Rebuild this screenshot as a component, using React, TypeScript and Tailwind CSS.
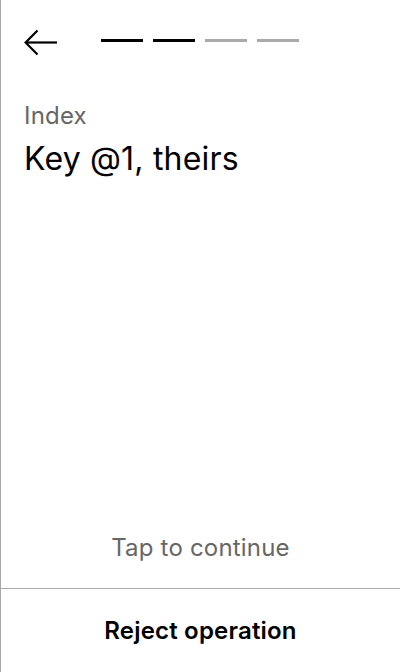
import React from "react";

export default function App() {
  return (
    <div
      className="w-[400px] h-[672px] flex flex-col bg-white border-l border-[#a8a8a8] text-black tracking-[0.012em]"
      style={{ fontFamily: "Inter, 'Noto Sans', sans-serif" }}
    >
      <div className="flex items-center h-[84px] pl-[23px] gap-[43px]">
        <svg width="34" height="27" viewBox="0 0 34 27" fill="none" stroke="black" strokeWidth="2.2">
          <path d="M33 13.5H2.5" />
          <path d="M13.5 1.5L1.6 13.5L13.5 25.5" />
        </svg>
        <div className="flex gap-[10px] mb-[3px]">
          <div className="w-[42px] h-[3px] bg-black" />
          <div className="w-[42px] h-[3px] bg-black" />
          <div className="w-[42px] h-[3px] bg-[#aaaaaa]" />
          <div className="w-[42px] h-[3px] bg-[#aaaaaa]" />
        </div>
      </div>
      <div className="px-[23px] pt-[16px] flex-1 flex flex-col">
        <div className="text-[24px] leading-[32px] text-[#666666]">Index</div>
        <div className="text-[32px] leading-[40px] mt-[7px]">Key @1, theirs</div>
      </div>
      <div className="text-center text-[24px] leading-[32px] text-[#666666] pb-[24px]">Tap to continue</div>
      <div className="border-t border-[#aaaaaa] h-[84px] flex items-center justify-center">
        <span className="text-[24px] leading-[32px] font-semibold">Reject operation</span>
      </div>
    </div>
  );
}
